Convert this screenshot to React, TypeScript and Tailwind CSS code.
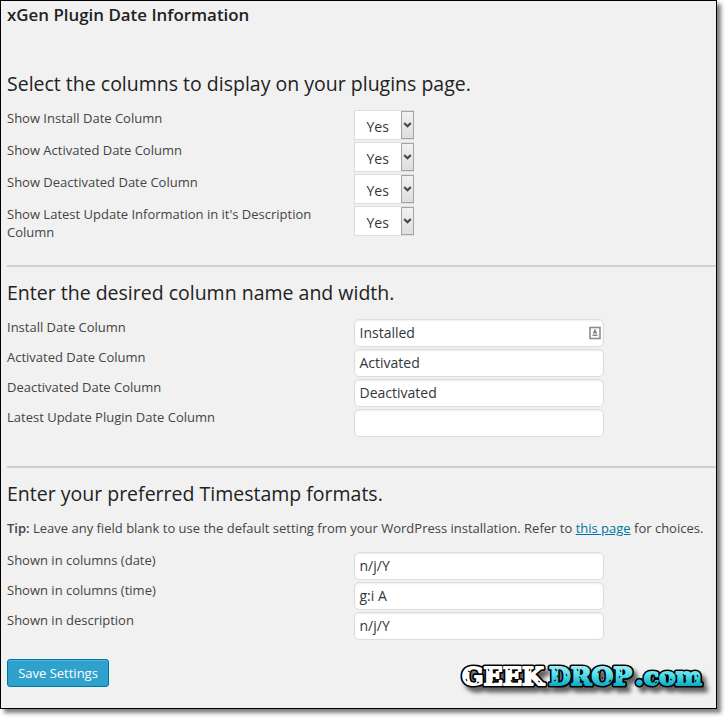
import React from "react";

function Heading({ children, className }: { children: React.ReactNode; className: string }) {
  return <h2 className={`text-[19.5px] leading-[28px] text-[#222] ${className}`}>{children}</h2>;
}

function SelectRow({ label }: { label: string }) {
  return (
    <div className="flex h-8 items-start">
      <div className="w-[347px] shrink-0 pr-8 leading-[18px]">{label}</div>
      <div className="mt-px flex h-[30px] w-[60px] border border-[#ddd] bg-white">
        <span className="flex-1 pl-[11.5px] pt-[6px] text-[14px] leading-[20px] text-[#32373c]">Yes</span>
        <span className="-mr-px flex h-[28px] w-[13px] items-center justify-center border border-[#a5a5a5] bg-linear-to-b from-[#f1f1f1] to-[#dedede]">
          <svg width="9" height="8" viewBox="0 0 9 8" className="shrink-0" fill="none" stroke="#444" strokeWidth="2">
            <path d="M1.2 2 4.5 5.3 7.8 2" />
          </svg>
        </span>
      </div>
    </div>
  );
}

function InputRow({ label, value, icon }: { label: string; value: string; icon?: boolean }) {
  return (
    <div className="flex h-[30px] items-start">
      <div className="w-[347px] shrink-0 leading-[18px]">{label}</div>
      <div className="mt-px flex h-[28px] w-[250px] items-center justify-between rounded-[5px] border border-[#ddd] bg-white pl-[4.5px] pr-[2px] text-[14px] leading-[20px] text-[#32373c] shadow-[inset_0_1px_2px_rgba(0,0,0,0.07)]">
        <span>{value}</span>
        {icon && (
          <svg width="12" height="14" viewBox="0 0 12 14">
            <rect x="1" y="1.5" width="10" height="11" fill="#fff" stroke="#8c8c8c" strokeWidth="1.6" />
            <path d="M5 3.5h2v2h1v2H4v-2h1zM3.5 8.5h5v1.5h-5z" fill="#888" />
          </svg>
        )}
      </div>
    </div>
  );
}

function Logo() {
  return (
    <svg
      width="256"
      height="44"
      viewBox="0 0 256 44"
      className="absolute bottom-[7px] right-[2px] [font-family:'DejaVu_Serif',serif] font-bold"
    >
      <defs>
        <linearGradient id="aqua" gradientUnits="userSpaceOnUse" x1="0" y1="8" x2="0" y2="29">
          <stop offset="0" stopColor="#a5f2f7" />
          <stop offset="0.5" stopColor="#4fdbe6" />
          <stop offset="1" stopColor="#08aac4" />
        </linearGradient>
        <filter id="shade" x="-5%" y="-20%" width="115%" height="170%">
          <feDropShadow dx="4" dy="5" stdDeviation="2.2" floodColor="#000" floodOpacity="0.6" />
        </filter>
      </defs>
      <g filter="url(#shade)" fill="#000" stroke="#000" strokeWidth="5.2" strokeLinejoin="round" fontSize="25">
        <text x="4" y="28" textLength="82" lengthAdjust="spacingAndGlyphs">GEEK</text>
        <text x="91" y="28" textLength="83" lengthAdjust="spacingAndGlyphs">DROP</text>
        <text x="177" y="28" textLength="67" lengthAdjust="spacingAndGlyphs">.com</text>
      </g>
      <g strokeWidth="1.8" strokeLinejoin="round" fontSize="25">
        <text x="4" y="28" textLength="82" lengthAdjust="spacingAndGlyphs" fill="#fff" stroke="#fff">GEEK</text>
        <text x="91" y="28" textLength="83" lengthAdjust="spacingAndGlyphs" fill="url(#aqua)" stroke="url(#aqua)">DROP</text>
        <text x="177" y="28" textLength="67" lengthAdjust="spacingAndGlyphs" fill="url(#aqua)" stroke="url(#aqua)">.com</text>
      </g>
      <path
        d="M10 14l2 1M8 22l1 2M19 26l2-1M30 12l1 2M34 25l2 1M50 13l2-1M53 23l1 2M72 12l-1 2M80 24l2 1M97 12l2 2M96 24l2-1M99 19l1 1M108 17l1 2M119 12l1 2M121 20l2 1M126 25l-2-1M132 21l1 2M141 14l-1 2M144 20l1 2M153 23l-2 2M162 13l1 2M162 19l-1 2M168 25l-2-1M194 19l1 2M197 26l2-1M212 22l2 1M207 17l1 2M225 17l1 2M228 23l-1 2M237 25l1-2M239 18l1 2"
        fill="none"
        stroke="#111"
        strokeWidth="1.1"
      />
    </svg>
  );
}

export default function App() {
  return (
    <div className="h-[718px] w-[726px] overflow-hidden bg-white">
      <div className="relative h-[709px] w-[717px] border border-black bg-[#f1f1f1] pl-[6px] text-[13px] text-[#444] shadow-[4px_4px_4px_rgba(0,0,0,0.5)] [font-family:'Open_Sans',sans-serif]">
        <h1 className="h-[69px] pt-[3px] text-[16.9px] font-semibold leading-[22px] text-[#222]">xGen Plugin Date Information</h1>
        <Heading className="mb-[11px]">Select the columns to display on your plugins page.</Heading>
        <SelectRow label="Show Install Date Column" />
        <SelectRow label="Show Activated Date Column" />
        <SelectRow label="Show Deactivated Date Column" />
        <SelectRow label="Show Latest Update Information in it's Description Column" />
        <hr className="mt-[28px] border-0 border-t-2 border-[#d0d0d0]" />
        <Heading className="mb-[11px] mt-[12px]">Enter the desired column name and width.</Heading>
        <InputRow label="Install Date Column" value="Installed" icon />
        <InputRow label="Activated Date Column" value="Activated" />
        <InputRow label="Deactivated Date Column" value="Deactivated" />
        <InputRow label="Latest Update Plugin Date Column" value="" />
        <hr className="mt-[28px] border-0 border-t-2 border-[#d0d0d0]" />
        <Heading className="mt-[12px]">Enter your preferred Timestamp formats.</Heading>
        <p className="mb-[13px] mt-[11px] whitespace-nowrap leading-[19px]">
          <b className="font-semibold">Tip:</b> Leave any field blank to use the default setting from your WordPress installation. Refer to{" "}
          <a className="text-[#0074a2] underline">this page</a> for choices.
        </p>
        <InputRow label="Shown in columns (date)" value="n/j/Y" />
        <InputRow label="Shown in columns (time)" value="g:i A" />
        <InputRow label="Shown in description" value="n/j/Y" />
        <button className="mt-[18px] block h-[28px] w-[102px] rounded-[3px] border border-[#0074a2] bg-[#2ea2cc] text-[13px] leading-[26px] text-white shadow-[inset_0_1px_0_rgba(120,200,230,0.5)]">
          Save Settings
        </button>
        <Logo />
      </div>
    </div>
  );
}
